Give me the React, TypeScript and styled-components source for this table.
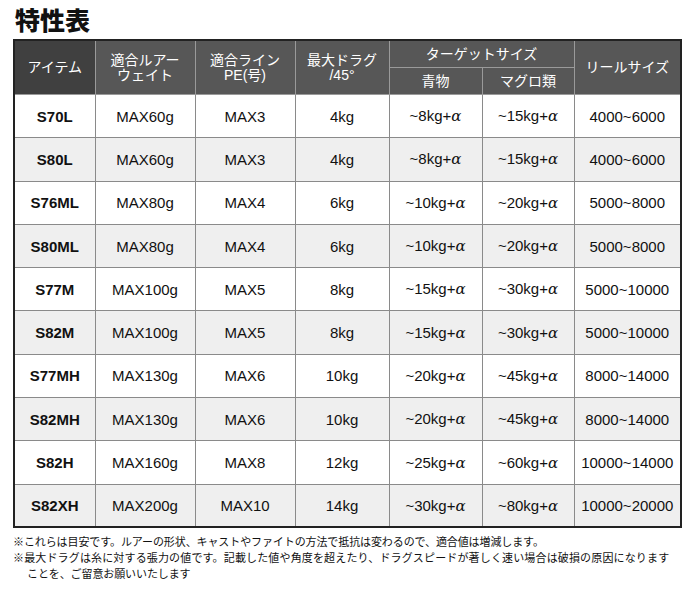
import styled, { createGlobalStyle } from "styled-components";

const GlobalStyle = createGlobalStyle`
  body {
    margin: 0;
    background: #fff;
    font-family: "Liberation Sans", "Noto Sans CJK JP", sans-serif;
    color: #111;
  }
`;

const rows = [
  ["S70L", "MAX60g", "MAX3", "4kg", "~8kg+α", "~15kg+α", "4000~6000"],
  ["S80L", "MAX60g", "MAX3", "4kg", "~8kg+α", "~15kg+α", "4000~6000"],
  ["S76ML", "MAX80g", "MAX4", "6kg", "~10kg+α", "~20kg+α", "5000~8000"],
  ["S80ML", "MAX80g", "MAX4", "6kg", "~10kg+α", "~20kg+α", "5000~8000"],
  ["S77M", "MAX100g", "MAX5", "8kg", "~15kg+α", "~30kg+α", "5000~10000"],
  ["S82M", "MAX100g", "MAX5", "8kg", "~15kg+α", "~30kg+α", "5000~10000"],
  ["S77MH", "MAX130g", "MAX6", "10kg", "~20kg+α", "~45kg+α", "8000~14000"],
  ["S82MH", "MAX130g", "MAX6", "10kg", "~20kg+α", "~45kg+α", "8000~14000"],
  ["S82H", "MAX160g", "MAX8", "12kg", "~25kg+α", "~60kg+α", "10000~14000"],
  ["S82XH", "MAX200g", "MAX10", "14kg", "~30kg+α", "~80kg+α", "10000~20000"],
];

const widths = [81, 100, 100, 94, 93, 92, 107];

const App = () => {
  return (
    <Page>
      <GlobalStyle />
      <Title>特性表</Title>
      <Table>
        <colgroup>
          {widths.map((w, i) => (
            <col key={i} style={{ width: w }} />
          ))}
        </colgroup>
        <thead>
          <tr>
            <Th rowSpan={2} $dark>
              アイテム
            </Th>
            <Th rowSpan={2}>
              適合ルアー
              <br />
              ウェイト
            </Th>
            <Th rowSpan={2}>
              適合ライン
              <br />
              PE(号)
            </Th>
            <Th rowSpan={2}>
              最大ドラグ
              <br />
              /45°
            </Th>
            <Th colSpan={2} $short>
              ターゲットサイズ
            </Th>
            <Th rowSpan={2}>リールサイズ</Th>
          </tr>
          <tr>
            <Th $short>青物</Th>
            <Th $short>マグロ類</Th>
          </tr>
        </thead>
        <tbody>
          {rows.map((r, i) => (
            <Row key={r[0]} $alt={i % 2 === 1}>
              {r.map((c, j) => (
                <Td key={j} $bold={j === 0}>
                  {c.replace("α", "")}
                  {c.includes("α") && <Alpha>α</Alpha>}
                </Td>
              ))}
            </Row>
          ))}
        </tbody>
      </Table>
      <Notes>
        <Note>※これらは目安です。ルアーの形状、キャストやファイトの方法で抵抗は変わるので、適合値は増減します。</Note>
        <Note $wide>※最大ドラグは糸に対する張力の値です。記載した値や角度を超えたり、ドラグスピードが著しく速い場合は破損の原因になります</Note>
        <Note $indent>ことを、ご留意お願いいたします</Note>
      </Notes>
    </Page>
  );
};

export default App;

const Page = styled.div`
  width: 689px;
  padding: 5px 0 0 13px;
  box-sizing: border-box;
`;

const Title = styled.h1`
  margin: 0 0 6px 2px;
  font-family: "Noto Sans CJK JP", sans-serif;
  font-size: 25px;
  font-weight: 900;
  line-height: 28px;
  color: #111;
`;

const Table = styled.table`
  width: 667px;
  border-collapse: collapse;
  table-layout: fixed;
  border: 2px solid #222;
`;

const Th = styled.th<{ $dark?: boolean; $short?: boolean }>`
  background: ${(p) => (p.$dark ? "#404040" : "#575757")};
  color: #fff;
  font-family: "Liberation Sans", "Noto Sans CJK JP", sans-serif;
  font-weight: 400;
  font-size: 14px;
  line-height: 15px;
  height: ${(p) => (p.$short ? "26px" : "auto")};
  padding: 0;
  border: 1px solid #9a9a9a;
  border-top-color: #222;
  text-align: center;
  vertical-align: middle;
`;

const Row = styled.tr<{ $alt: boolean }>`
  background: ${(p) => (p.$alt ? "#efefef" : "#fff")};
  height: 43.3px;
`;

const Td = styled.td<{ $bold: boolean }>`
  border: 1px solid #8a8a8a;
  padding: 0;
  text-align: center;
  vertical-align: middle;
  font-size: 15px;
  font-weight: ${(p) => (p.$bold ? 700 : 400)};
  color: #111;
`;

const Alpha = styled.span`
  font-family: "DejaVu Serif", serif;
  font-style: italic;
  font-size: 15px;
`;

const Notes = styled.div`
  margin-top: 5px;
  font-family: "Noto Sans CJK JP", sans-serif;
  font-size: 11px;
  line-height: 16px;
  color: #111;
`;

const Note = styled.div<{ $indent?: boolean; $wide?: boolean }>`
  padding-left: ${(p) => (p.$indent ? "14px" : "0")};
  letter-spacing: ${(p) => (p.$wide ? "0.15px" : "-0.1px")};
  white-space: nowrap;
`;
